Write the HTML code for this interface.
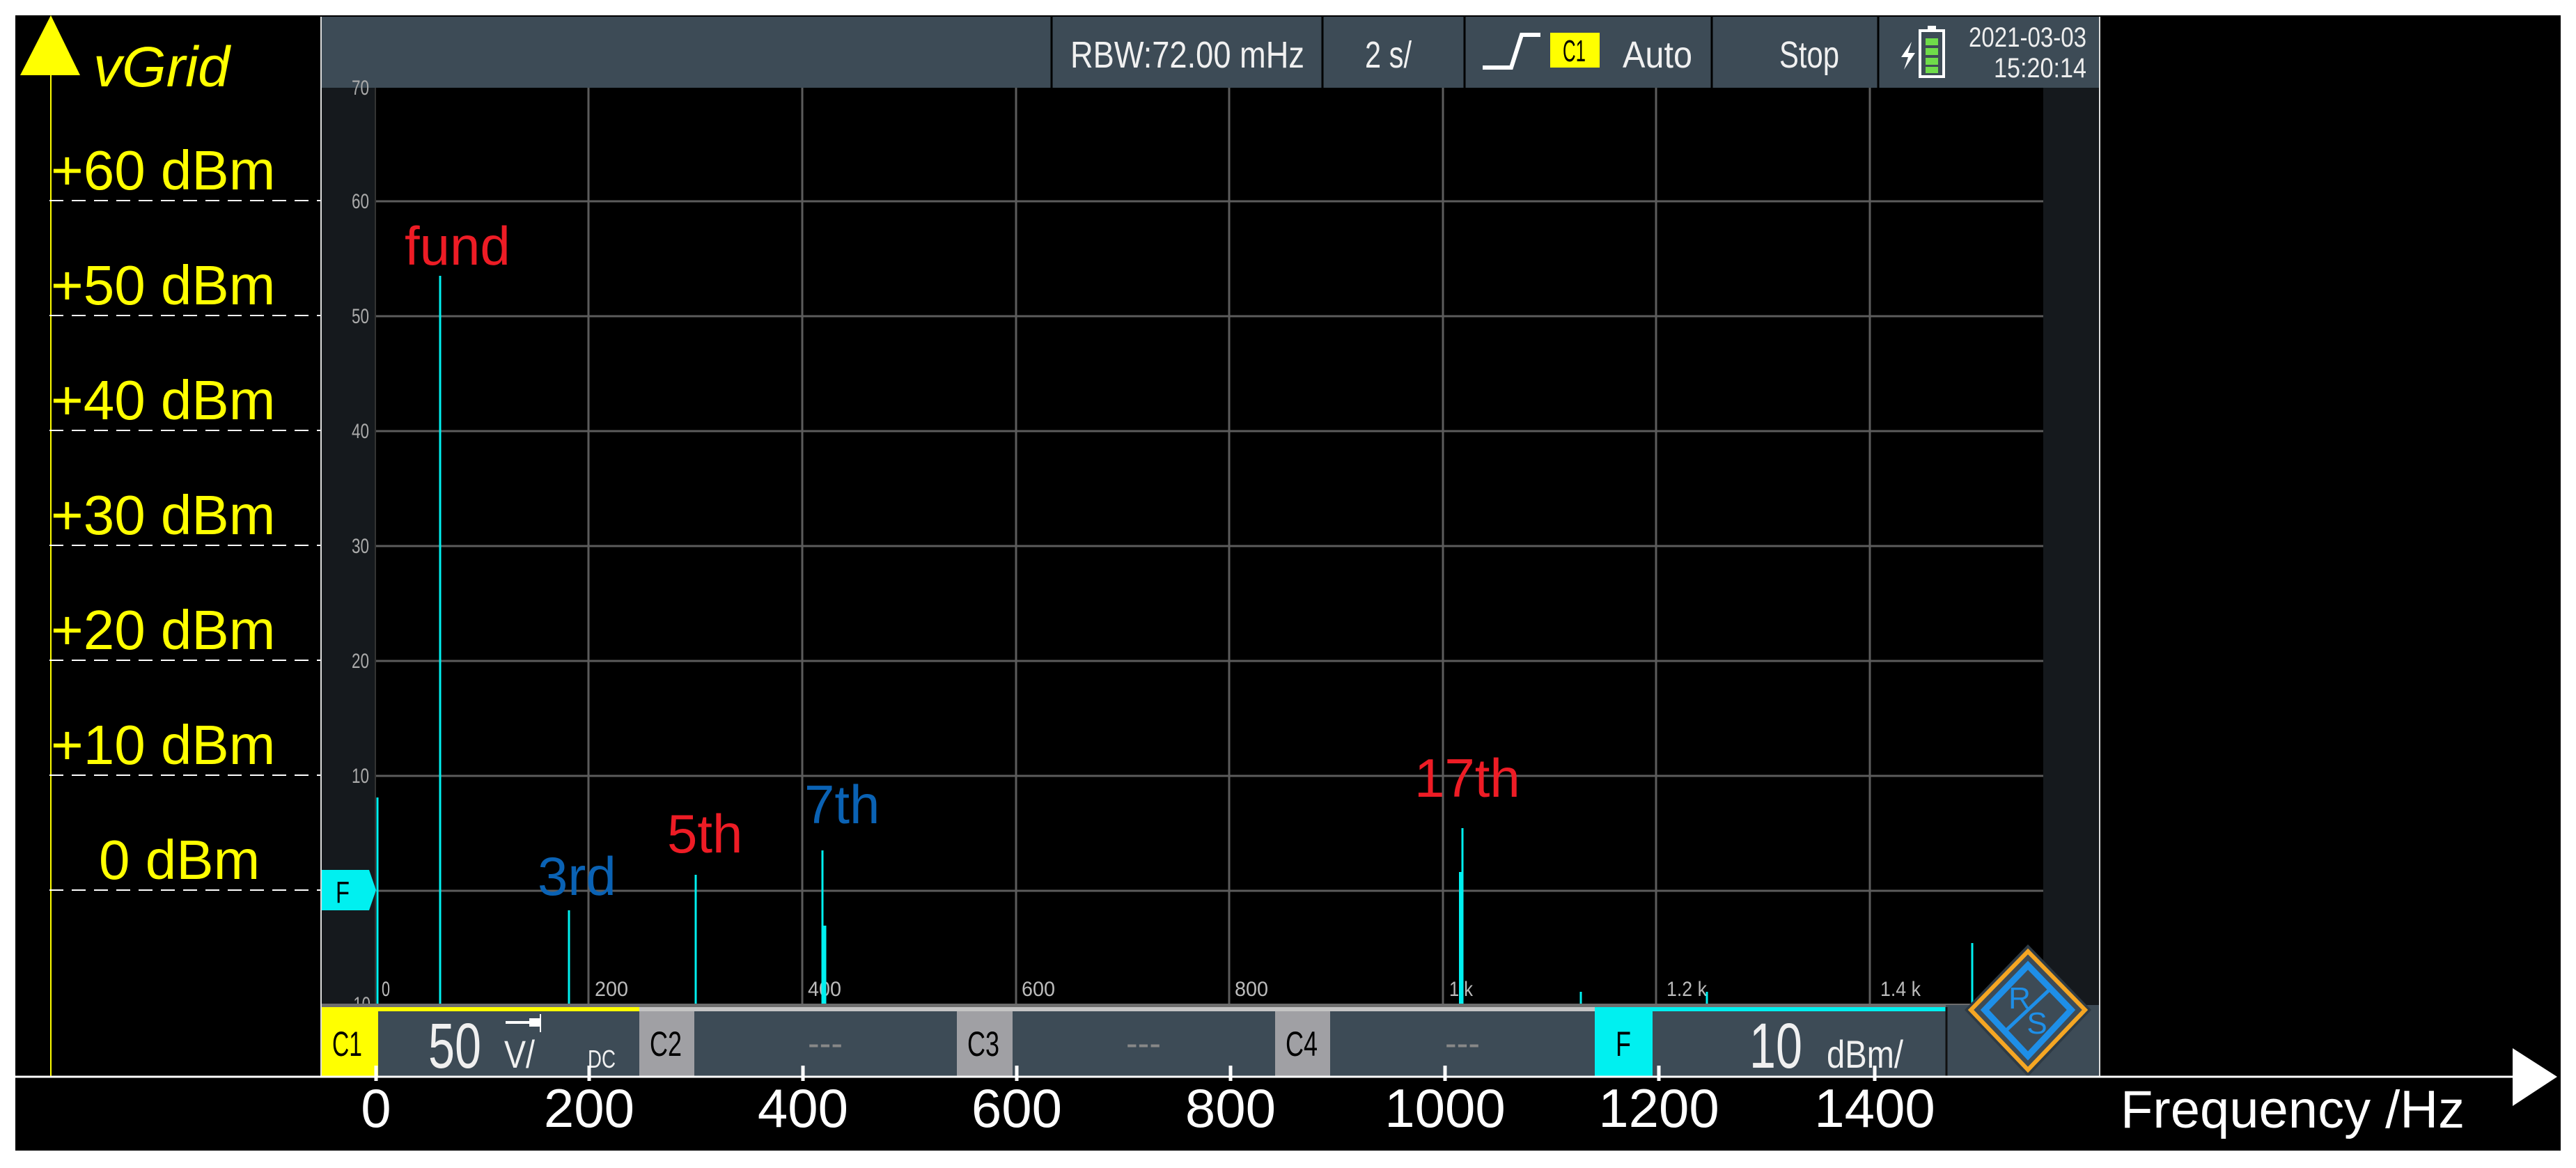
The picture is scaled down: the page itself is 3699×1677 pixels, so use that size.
<!DOCTYPE html>
<html><head><meta charset="utf-8"><style>
html,body{margin:0;padding:0;background:#fff;}
svg{display:block;}
.n{font-family:"Liberation Sans",sans-serif;}
.s{font-family:"Liberation Sans",sans-serif;}
</style></head><body>
<svg width="3699" height="1677" viewBox="0 0 3699 1677" xmlns="http://www.w3.org/2000/svg">
<rect x="0" y="0" width="3699" height="1677" fill="#fff"/>
<rect x="22" y="22" width="3655" height="1630" fill="#000"/>

<polygon points="29,108 73,22 115,108" fill="#ffff00"/>
<line x1="73" y1="108" x2="73" y2="1546" stroke="#ffff00" stroke-width="2"/>
<text x="134" y="124" class="s" font-size="82" font-style="italic" fill="#ffff00">vGrid</text>
<g class="s" font-size="80" fill="#ffff00">
<text x="73" y="272">+60 dBm</text>
<text x="73" y="437">+50 dBm</text>
<text x="73" y="602">+40 dBm</text>
<text x="73" y="767">+30 dBm</text>
<text x="73" y="932">+20 dBm</text>
<text x="73" y="1097">+10 dBm</text>
<text x="142" y="1262">0 dBm</text>
</g>
<g stroke="#fff" stroke-width="2" stroke-dasharray="20 12">
<line x1="71" y1="288" x2="461" y2="288"/>
<line x1="71" y1="453" x2="461" y2="453"/>
<line x1="71" y1="618" x2="461" y2="618"/>
<line x1="71" y1="783" x2="461" y2="783"/>
<line x1="71" y1="948" x2="461" y2="948"/>
<line x1="71" y1="1113" x2="461" y2="1113"/>
<line x1="71" y1="1278" x2="461" y2="1278"/>
</g>

<rect x="460" y="24" width="2556" height="1522" fill="#dcdcdc"/>
<rect x="462" y="24" width="2552" height="102" fill="#3d4b56"/>
<g stroke="#000" stroke-width="3">
<line x1="1510" y1="24" x2="1510" y2="126"/>
<line x1="1899" y1="24" x2="1899" y2="126"/>
<line x1="2103" y1="24" x2="2103" y2="126"/>
<line x1="2458" y1="24" x2="2458" y2="126"/>
<line x1="2697" y1="24" x2="2697" y2="126"/>
</g>
<g class="n" font-size="54" fill="#f0f0f0">
<text x="1537" y="97" textLength="336" lengthAdjust="spacingAndGlyphs">RBW:72.00 mHz</text>
<text x="1960" y="97" textLength="67" lengthAdjust="spacingAndGlyphs">2 s/</text>
<text x="2555" y="97" textLength="86" lengthAdjust="spacingAndGlyphs">Stop</text>
<text x="2330" y="97" textLength="100" lengthAdjust="spacingAndGlyphs">Auto</text>
</g>
<polyline points="2129,97 2170,97 2185,50 2212,50" fill="none" stroke="#fff" stroke-width="6"/>
<rect x="2226" y="47" width="71" height="50" fill="#ffff00"/>
<text x="2244" y="88" class="n" font-size="44" fill="#000" textLength="33" lengthAdjust="spacingAndGlyphs">C1</text>
<rect x="2757" y="44" width="34" height="66" fill="none" stroke="#fff" stroke-width="4"/>
<rect x="2768" y="37" width="12" height="8" fill="#fff"/>
<g fill="#6fdc4a"><rect x="2765" y="55" width="18" height="10"/><rect x="2765" y="69" width="18" height="10"/><rect x="2765" y="83" width="18" height="10"/><rect x="2765" y="96" width="18" height="9"/></g>
<polygon points="2745,60 2730,82 2740,82 2734,100 2750,76 2740,76" fill="#fff"/>
<g class="n" font-size="40" fill="#eee">
<text x="2827" y="67" textLength="169" lengthAdjust="spacingAndGlyphs">2021-03-03</text>
<text x="2863" y="111" textLength="133" lengthAdjust="spacingAndGlyphs">15:20:14</text>
</g>

<rect x="462" y="126" width="77" height="1320" fill="#15191d"/>
<rect x="2934" y="126" width="80" height="1320" fill="#15191d"/>
<rect x="539" y="126" width="2395" height="1317" fill="#000"/>
<g stroke="#5c5c5c" stroke-width="3">
<line x1="845" y1="126" x2="845" y2="1443"/>
<line x1="1152" y1="126" x2="1152" y2="1443"/>
<line x1="1459" y1="126" x2="1459" y2="1443"/>
<line x1="1765" y1="126" x2="1765" y2="1443"/>
<line x1="2072" y1="126" x2="2072" y2="1443"/>
<line x1="2378" y1="126" x2="2378" y2="1443"/>
<line x1="2685" y1="126" x2="2685" y2="1443"/>
<line x1="539" y1="289" x2="2934" y2="289"/>
<line x1="539" y1="454" x2="2934" y2="454"/>
<line x1="539" y1="619" x2="2934" y2="619"/>
<line x1="539" y1="784" x2="2934" y2="784"/>
<line x1="539" y1="949" x2="2934" y2="949"/>
<line x1="539" y1="1114" x2="2934" y2="1114"/>
<line x1="539" y1="1279" x2="2934" y2="1279"/>
</g>
<line x1="539" y1="126" x2="539" y2="1443" stroke="#333" stroke-width="2"/>
<g class="n" font-size="30" fill="#aaa">
<text x="505" y="136" textLength="25" lengthAdjust="spacingAndGlyphs">70</text>
<text x="505" y="299" textLength="25" lengthAdjust="spacingAndGlyphs">60</text>
<text x="505" y="464" textLength="25" lengthAdjust="spacingAndGlyphs">50</text>
<text x="505" y="629" textLength="25" lengthAdjust="spacingAndGlyphs">40</text>
<text x="505" y="794" textLength="25" lengthAdjust="spacingAndGlyphs">30</text>
<text x="505" y="959" textLength="25" lengthAdjust="spacingAndGlyphs">20</text>
<text x="505" y="1124" textLength="25" lengthAdjust="spacingAndGlyphs">10</text>
<text x="500" y="1452" textLength="32" lengthAdjust="spacingAndGlyphs">-10</text>
</g>
<g class="n" font-size="30" fill="#bbb">
<text x="548" y="1430" textLength="12" lengthAdjust="spacingAndGlyphs">0</text>
<text x="854" y="1430" textLength="48" lengthAdjust="spacingAndGlyphs">200</text>
<text x="1160" y="1430" textLength="48" lengthAdjust="spacingAndGlyphs">400</text>
<text x="1467" y="1430" textLength="48" lengthAdjust="spacingAndGlyphs">600</text>
<text x="1773" y="1430" textLength="48" lengthAdjust="spacingAndGlyphs">800</text>
<text x="2081" y="1430" textLength="34" lengthAdjust="spacingAndGlyphs">1 k</text>
<text x="2393" y="1430" textLength="58" lengthAdjust="spacingAndGlyphs">1.2 k</text>
<text x="2700" y="1430" textLength="58" lengthAdjust="spacingAndGlyphs">1.4 k</text>
</g>
<g stroke="#00f0f0" stroke-width="3">
<line x1="542" y1="1145" x2="542" y2="1443"/>
<line x1="632" y1="396" x2="632" y2="1443"/>
<line x1="817" y1="1307" x2="817" y2="1443"/>
<line x1="999" y1="1256" x2="999" y2="1443"/>
<line x1="1181" y1="1221" x2="1181" y2="1443"/>
<line x1="1184" y1="1329" x2="1184" y2="1443" stroke-width="5"/>
<line x1="2100" y1="1189" x2="2100" y2="1443"/>
<line x1="2097" y1="1252" x2="2097" y2="1443" stroke-width="4"/>
<line x1="2270" y1="1424" x2="2270" y2="1443"/>
<line x1="2451" y1="1424" x2="2451" y2="1443"/>
<line x1="2832" y1="1354" x2="2832" y2="1443"/>
</g>
<g class="s" font-size="78">
<text x="581" y="380" fill="#ee1c25">fund</text>
<text x="772" y="1285" fill="#0a62b4">3rd</text>
<text x="958" y="1224" fill="#ee1c25">5th</text>
<text x="1155" y="1182" fill="#0a62b4">7th</text>
<text x="2031" y="1144" fill="#ee1c25">17th</text>
</g>
<polygon points="462,1249 530,1249 540,1278 530,1307 462,1307" fill="#00f0f0"/>
<text x="482" y="1296" class="n" font-size="44" fill="#000" textLength="20" lengthAdjust="spacingAndGlyphs">F</text>

<rect x="462" y="1441" width="2472" height="5" fill="#6e6e6e"/>
<rect x="462" y="1446" width="456" height="6" fill="#ffff00"/>
<rect x="918" y="1446" width="1372" height="6" fill="#c4c4c4"/>
<rect x="2290" y="1446" width="504" height="6" fill="#00f0f0"/>
<rect x="2794" y="1443" width="220" height="9" fill="#3d4b56"/>
<rect x="462" y="1452" width="81" height="94" fill="#ffff00"/>
<rect x="543" y="1452" width="375" height="94" fill="#3d4b56"/>
<rect x="918" y="1452" width="79" height="94" fill="#a0a0a4"/>
<rect x="997" y="1452" width="377" height="94" fill="#3d4b56"/>
<rect x="1374" y="1452" width="80" height="94" fill="#a0a0a4"/>
<rect x="1454" y="1452" width="377" height="94" fill="#3d4b56"/>
<rect x="1831" y="1452" width="79" height="94" fill="#a0a0a4"/>
<rect x="1910" y="1452" width="380" height="94" fill="#3d4b56"/>
<rect x="2290" y="1452" width="83" height="94" fill="#00f0f0"/>
<rect x="2373" y="1452" width="421" height="94" fill="#3d4b56"/>
<rect x="2794" y="1452" width="220" height="94" fill="#3d4b56"/>
<line x1="2795" y1="1446" x2="2795" y2="1546" stroke="#111" stroke-width="3"/>
<g class="n" font-size="50" fill="#000">
<text x="477" y="1516" textLength="43" lengthAdjust="spacingAndGlyphs">C1</text>
<text x="933" y="1516" textLength="46" lengthAdjust="spacingAndGlyphs">C2</text>
<text x="1389" y="1516" textLength="46" lengthAdjust="spacingAndGlyphs">C3</text>
<text x="1846" y="1516" textLength="46" lengthAdjust="spacingAndGlyphs">C4</text>
<text x="2320" y="1516" textLength="22" lengthAdjust="spacingAndGlyphs">F</text>
</g>
<g class="s" fill="#888" font-size="50" text-anchor="middle">
<text x="1185" y="1515">---</text>
<text x="1642" y="1515">---</text>
<text x="2100" y="1515">---</text>
</g>
<g class="n" fill="#f0f0f0">
<text x="615" y="1533" font-size="92" textLength="76" lengthAdjust="spacingAndGlyphs">50</text>
<text x="724" y="1533" font-size="56" textLength="44" lengthAdjust="spacingAndGlyphs">V/</text>
<text x="844" y="1533" font-size="36" textLength="40" lengthAdjust="spacingAndGlyphs">DC</text>
<text x="2512" y="1533" font-size="92" textLength="76" lengthAdjust="spacingAndGlyphs">10</text>
<text x="2623" y="1533" font-size="56" textLength="110" lengthAdjust="spacingAndGlyphs">dBm/</text>
</g>
<rect x="760" y="1462" width="16" height="12" fill="#fff"/>
<rect x="726" y="1466" width="36" height="4" fill="#fff"/>
<line x1="776" y1="1456" x2="776" y2="1482" stroke="#fff" stroke-width="2"/>
<polygon points="2912,1356 3003,1450 2912,1546 2821,1450" fill="#2e3a44"/>
<polygon points="2912,1366 2994,1450 2912,1536 2830,1450" fill="#3d4b56" stroke="#f5a623" stroke-width="6"/>
<polygon points="2912,1386 2974,1450 2912,1516 2850,1450" fill="none" stroke="#1e8fe8" stroke-width="9"/>
<line x1="2880" y1="1480" x2="2944" y2="1420" stroke="#1e8fe8" stroke-width="5"/>
<text x="2900" y="1448" class="s" font-size="44" fill="#1e8fe8" text-anchor="middle">R</text>
<text x="2925" y="1484" class="s" font-size="44" fill="#1e8fe8" text-anchor="middle">S</text>

<line x1="22" y1="1546" x2="3610" y2="1546" stroke="#fff" stroke-width="3"/>
<polygon points="3608,1505 3672,1546 3608,1588" fill="#fff"/>
<g stroke="#fff" stroke-width="5">
<line x1="540" y1="1530" x2="540" y2="1552"/>
<line x1="846" y1="1530" x2="846" y2="1552"/>
<line x1="1153" y1="1530" x2="1153" y2="1552"/>
<line x1="1460" y1="1530" x2="1460" y2="1552"/>
<line x1="1767" y1="1530" x2="1767" y2="1552"/>
<line x1="2075" y1="1530" x2="2075" y2="1552"/>
<line x1="2382" y1="1530" x2="2382" y2="1552"/>
<line x1="2692" y1="1530" x2="2692" y2="1552"/>
</g>
<g class="s" font-size="78" fill="#fff" text-anchor="middle">
<text x="540" y="1618">0</text>
<text x="846" y="1618">200</text>
<text x="1153" y="1618">400</text>
<text x="1460" y="1618">600</text>
<text x="1767" y="1618">800</text>
<text x="2075" y="1618">1000</text>
<text x="2382" y="1618">1200</text>
<text x="2692" y="1618">1400</text>
</g>
<text x="3045" y="1619" class="s" font-size="76" fill="#fff">Frequency /Hz</text>
</svg>
</body></html>
